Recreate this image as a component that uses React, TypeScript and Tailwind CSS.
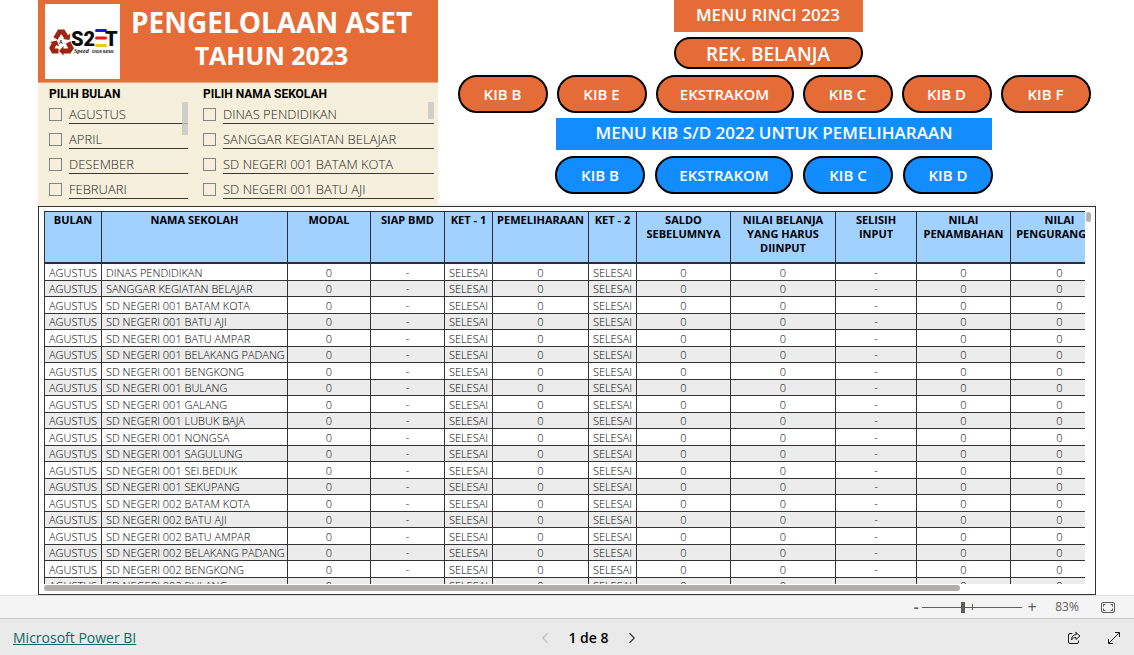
import { ChevronLeft, ChevronRight } from "lucide-react";

const months = ["AGUSTUS", "APRIL", "DESEMBER", "FEBRUARI"];

const schools = [
    "DINAS PENDIDIKAN",
    "SANGGAR KEGIATAN BELAJAR",
    "SD NEGERI 001 BATAM KOTA",
    "SD NEGERI 001 BATU AJI",
];

const columns = [
    { title: "BULAN", width: "w-[57px]" },
    { title: "NAMA SEKOLAH", width: "w-[186px]" },
    { title: "MODAL", width: "w-[83px]" },
    { title: "SIAP BMD", width: "w-[74px]" },
    { title: "KET - 1", width: "w-[48px]" },
    { title: "PEMELIHARAAN", width: "w-[96px]" },
    { title: "KET - 2", width: "w-[48px]" },
    { title: "SALDO SEBELUMNYA", width: "w-[94px]" },
    { title: "NILAI BELANJA YANG HARUS DIINPUT", width: "w-[105px]" },
    { title: "SELISIH INPUT", width: "w-[81px]" },
    { title: "NILAI PENAMBAHAN", width: "w-[94px]" },
    { title: "NILAI PENGURANGAN", width: "w-[98px]" },
];

const rows = [
    "DINAS PENDIDIKAN",
    "SANGGAR KEGIATAN BELAJAR",
    "SD NEGERI 001 BATAM KOTA",
    "SD NEGERI 001 BATU AJI",
    "SD NEGERI 001 BATU AMPAR",
    "SD NEGERI 001 BELAKANG PADANG",
    "SD NEGERI 001 BENGKONG",
    "SD NEGERI 001 BULANG",
    "SD NEGERI 001 GALANG",
    "SD NEGERI 001 LUBUK BAJA",
    "SD NEGERI 001 NONGSA",
    "SD NEGERI 001 SAGULUNG",
    "SD NEGERI 001 SEI.BEDUK",
    "SD NEGERI 001 SEKUPANG",
    "SD NEGERI 002 BATAM KOTA",
    "SD NEGERI 002 BATU AJI",
    "SD NEGERI 002 BATU AMPAR",
    "SD NEGERI 002 BELAKANG PADANG",
    "SD NEGERI 002 BENGKONG",
    "SD NEGERI 002 BULANG",
];

// same figures for every school in this month
const values = ["0", "-", "SELESAI", "0", "SELESAI", "0", "0", "-", "0", "0"];

function Logo() {
    return (
        <svg viewBox="0 0 75 75" className="size-[75px] shrink-0 bg-white" role="img" aria-label="ASSET">
            <g fill="none" stroke="#9c2410" strokeWidth="5">
                <path d="M10.5 34.5l4-6.5h3.500l3.500 5.500" />
                <path d="M23 38.500l3 5.500-2 3h-6.500" />
                <path d="M13.500 47H8.500l-1.500-3 2.500-5" />
            </g>
            <g fill="#9c2410">
                <path d="M18 35l6.500 1 1-6.500z" />
                <path d="M18.500 42v9.500l-4.500-4.500z" />
                <path d="M5 38l7-1.500 2 6z" />
            </g>
            <text x="14" y="40" fontSize="5" fontWeight="700" fill="#111" fontFamily="Liberation Sans">A</text>
            <g fontFamily="Roboto, sans-serif" fontWeight="900" fontSize="20" fill="#0b0b0b">
                <text x="26" y="42">S2</text>
                <text x="60" y="42">T</text>
            </g>
            <g strokeWidth="3" strokeLinecap="round">
                <path d="M51.500 26.500h9" stroke="#1414f0" />
                <path d="M51.500 34h9" stroke="#f01414" />
                <path d="M51.500 41.500h9" stroke="#f5c518" />
            </g>
            <text x="29" y="49" fontFamily="Liberation Serif" fontStyle="italic" fontWeight="700" fontSize="6" fill="#111">Speed</text>
            <text x="47" y="49" fontFamily="Liberation Sans" fontWeight="700" fontSize="3" fill="#111">DISDIK BATAM</text>
        </svg>
    );
}

type SlicerProps = { title: string; items: string[]; className: string; thumb: string };

function Slicer({ title, items, className, thumb }: SlicerProps) {
    return (
        <fieldset className={className}>
            <legend className="font-[Roboto,sans-serif] text-xs leading-4 font-bold text-black">{title}</legend>
            <div className="relative">
                {items.map((item) => (
                    <label key={item} className="flex h-[25px] items-center gap-[7px]">
                        <input type="checkbox" className="size-[13px] shrink-0 appearance-none border border-[#858585] checked:bg-[#555]" />
                        <span className="h-[22px] flex-1 self-start border-b border-[#3c3a35] text-[13px] leading-6 font-[350] whitespace-nowrap">{item}</span>
                    </label>
                ))}
                <div className={thumb} />
            </div>
        </fieldset>
    );
}

type PillProps = { label: string; color: "orange" | "blue"; wide?: boolean };

function Pill({ label, color, wide }: PillProps) {
    return (
        <button
            className={`h-[38px] rounded-full border-2 border-black text-[15px] leading-5 font-semibold text-white ${wide ? "w-[138px]" : "w-[90px]"} ${color === "orange" ? "bg-[#e66c37]" : "bg-[#118dff]"}`}
        >
            {label}
        </button>
    );
}

function AssetTable() {
    return (
        <table className="w-[1065px] table-fixed border-separate border-spacing-0 border-l border-[#333]">
            <thead>
                <tr className="h-[53px] bg-[#a0d1ff] align-top">
                    {columns.map((column) => (
                        <th
                            key={column.title}
                            className={`${column.width} border-t border-r border-b-2 border-[#2b2f33] px-1 pt-px text-[11px] leading-[14px] font-bold text-black`}
                        >
                            {column.title}
                        </th>
                    ))}
                </tr>
            </thead>
            <tbody>
                {rows.map((name) => (
                    <tr key={name} className="h-[17px] bg-white even:h-4 even:bg-[#ececec]">
                        <td className="border-r border-b border-[#333] p-0 text-center">AGUSTUS</td>
                        <td className="border-r border-b border-[#333] py-0 pr-0 pl-1 whitespace-nowrap">{name}</td>
                        {values.map((value, i) => (
                            <td key={i} className="border-r border-b border-[#333] p-0 text-center">{value}</td>
                        ))}
                    </tr>
                ))}
            </tbody>
        </table>
    );
}

function ZoomBar() {
    return (
        <div className="flex h-[23px] shrink-0 items-center justify-end border-t border-[#e1e1e1] bg-[#f4f4f4] pr-[19px] text-[#605e5c]">
            <button aria-label="Perkecil" className="w-3 text-base leading-4 font-semibold">-</button>
            <div className="relative flex h-4 items-center">
                <input
                    type="range"
                    aria-label="Zoom"
                    min={0}
                    max={100}
                    defaultValue={41}
                    className="h-px w-[100px] appearance-none bg-[#605e5c] [&::-webkit-slider-thumb]:h-[11px] [&::-webkit-slider-thumb]:w-1 [&::-webkit-slider-thumb]:appearance-none [&::-webkit-slider-thumb]:bg-[#605e5c]"
                />
                <span className="absolute top-[5px] left-[50px] h-[6px] w-px bg-[#605e5c]" />
            </div>
            <button aria-label="Perbesar" className="w-5 text-base leading-4">+</button>
            <span className="w-[50px] text-center text-xs">83%</span>
            <button aria-label="Sesuaikan halaman" className="ml-[9px]">
                <svg width="14" height="11" viewBox="0 0 14 11" fill="none" stroke="#605e5c">
                    <rect x=".5" y=".5" width="13" height="10" rx="1.500" />
                    <path d="M4.500 2.500h-2v2M9.500 2.500h2v2M4.500 8.500h-2v-2M9.500 8.500h2v-2" />
                </svg>
            </button>
        </div>
    );
}

function Footer() {
    return (
        <footer className="grid h-[37px] shrink-0 grid-cols-[1fr_auto_1fr] items-center border-t border-[#c8c8c8] bg-[#eaeaea] px-[13px] pt-[2px] text-sm">
            <div>
                <a href="#" className="text-[#0e6b64] underline">Microsoft Power BI</a>
            </div>
            <nav className="flex items-center gap-[14px] pl-[43px]">
                <button aria-label="Halaman sebelumnya" disabled className="text-[#bdbdbd]">
                    <ChevronLeft size={18} strokeWidth={1.5} />
                </button>
                <span className="font-semibold text-black">1 de 8</span>
                <button aria-label="Halaman berikutnya" className="text-[#333]">
                    <ChevronRight size={18} strokeWidth={1.5} />
                </button>
            </nav>
            <div className="flex items-center justify-end gap-[26px]">
                <button aria-label="Bagikan">
                    <svg width="14" height="14" viewBox="0 0 14 14" fill="none" stroke="#1b1b1b" strokeLinejoin="round" strokeLinecap="round">
                        <path d="M5 2.500H3a1.500 1.500 0 0 0-1.500 1.500v7A1.500 1.500 0 0 0 3 12.500h7a1.500 1.500 0 0 0 1.500-1.500v-1" />
                        <path d="M9 1.500l4 3.500-4 3.500v-2c-2 0-3.500.7-4.500 2.500 0-3 1.500-5.200 4.500-5.500z" />
                    </svg>
                </button>
                <button aria-label="Layar penuh">
                    <svg width="14" height="14" viewBox="0 0 14 14" fill="none" stroke="#1b1b1b">
                        <path d="M1.500 12.500l11-11M8 1.500h4.500V6M1.500 8v4.500H6" />
                    </svg>
                </button>
            </div>
        </footer>
    );
}

function App() {
    return (
        <div className="flex h-screen flex-col overflow-hidden bg-white font-['Open_Sans',sans-serif] text-[#252423]">
            <main className="flex min-h-0 flex-1 flex-col px-[38px]">
                <div className="flex h-[206px] shrink-0">
                    <section className="w-[400px] bg-[#f5efdc]">
                        <header className="flex h-[83px] gap-2 border-b border-[#f0a585] bg-[#e66c37] pt-1 pl-[7px]">
                            <Logo />
                            <h1 className="flex-1 pr-[23px] text-center font-bold whitespace-nowrap text-white">
                                <span className="block text-[28px] leading-9">PENGELOLAAN ASET</span>
                                <span className="block text-[25px] leading-[30px]">TAHUN 2023</span>
                            </h1>
                        </header>
                        <div className="flex gap-[15px] pt-[3px] pr-1 pl-[11px]">
                            <Slicer
                                title="PILIH BULAN"
                                items={months}
                                className="w-[139px]"
                                thumb="absolute top-0 right-0 h-[33px] w-[6px] bg-[#c8c6c4]/80"
                            />
                            <Slicer
                                title="PILIH NAMA SEKOLAH"
                                items={schools}
                                className="min-w-0 flex-1"
                                thumb="absolute top-0 right-0 h-[17px] w-[6px] bg-[#c8c6c4]/80"
                            />
                        </div>
                    </section>
                    <section className="flex flex-1 flex-col">
                        <div className="flex flex-col items-center gap-[5px] pl-[2px]">
                            <h2 className="h-8 w-[189px] bg-[#e66c37] text-center text-[17px] leading-[30px] font-[650] text-white">MENU RINCI 2023</h2>
                            <button className="h-8 w-[189px] rounded-full border-2 border-black bg-[#e66c37] pt-px text-[19px] leading-7 font-semibold text-white">REK. BELANJA</button>
                        </div>
                        <div className="flex flex-col items-center gap-[5px] pt-[6px] pl-[14px]">
                            <div className="flex gap-[9px]">
                                <Pill label="KIB B" color="orange" />
                                <Pill label="KIB E" color="orange" />
                                <Pill label="EKSTRAKOM" color="orange" wide />
                                <Pill label="KIB C" color="orange" />
                                <Pill label="KIB D" color="orange" />
                                <Pill label="KIB F" color="orange" />
                            </div>
                            <h2 className="h-8 w-[436px] bg-[#118dff] text-center text-[17px] leading-[30px] font-[650] text-white">MENU KIB S/D 2022 UNTUK PEMELIHARAAN</h2>
                            <div className="flex gap-[10px] pt-px">
                                <Pill label="KIB B" color="blue" />
                                <Pill label="EKSTRAKOM" color="blue" wide />
                                <Pill label="KIB C" color="blue" />
                                <Pill label="KIB D" color="blue" />
                            </div>
                        </div>
                        <div className="mt-auto h-[6px] bg-linear-to-b from-white to-[#f1f1f1]" />
                    </section>
                </div>
                <section className="flex min-h-0 flex-1 flex-col border border-[#333] pt-1 pr-1 pb-[3px] pl-[5px]">
                    <div className="flex min-h-0 flex-1 gap-px">
                        <div className="min-w-0 flex-1 overflow-hidden text-[11px] leading-[15px] font-[350] text-black">
                            <AssetTable />
                        </div>
                        <div className="w-[5px] pt-px">
                            <div className="h-[10px] rounded-full bg-[#b3b3b3]" />
                        </div>
                    </div>
                    <div className="mt-px h-[6px] w-7/8 rounded-full bg-[#b0aeab]" />
                </section>
            </main>
            <ZoomBar />
            <Footer />
        </div>
    );
}

export default App;
